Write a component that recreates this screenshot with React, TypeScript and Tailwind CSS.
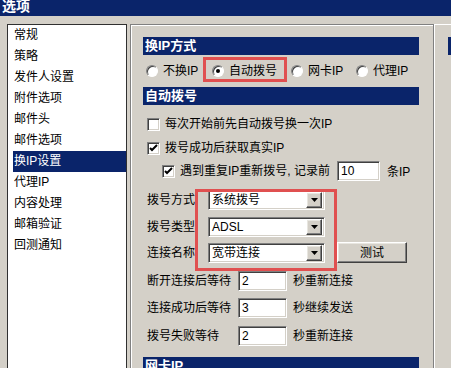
import { ReactNode } from 'react';

const sunken =
  'border border-t-[#808080] border-l-[#808080] border-r-white border-b-white shadow-[inset_1px_1px_0_#404040,inset_-1px_-1px_0_#d4d0c8]';
const raised =
  'border border-t-white border-l-white border-r-[#404040] border-b-[#404040] shadow-[inset_-1px_-1px_0_#808080,inset_1px_1px_0_#e8e6e0] bg-[#d4d0c8]';

const menu = ['常规', '策略', '发件人设置', '附件选项', '邮件头', '邮件选项', '换IP设置', '代理IP', '内容处理', '邮箱验证', '回测通知'];

const Header = ({ children }: { children: ReactNode }) => (
  <div className="h-[18px] w-[276px] bg-[#0a246a] pl-[2px] text-[13px] font-bold leading-[18px] text-white">
    {children}
  </div>
);

const Radio = ({ checked, label, width }: { checked?: boolean; label: string; width: string }) => (
  <div className={`flex items-center ${width}`}>
    <div className="relative flex h-[12px] w-[12px] items-center justify-center rounded-full border border-t-[#808080] border-l-[#808080] border-r-white border-b-white bg-white shadow-[inset_1px_1px_0_#404040]">
      {checked && <div className="h-[4px] w-[4px] rounded-full bg-black" />}
    </div>
    <span className="ml-[5px]">{label}</span>
  </div>
);

const Checkbox = ({ checked }: { checked?: boolean }) => (
  <div className={`flex h-[13px] w-[13px] shrink-0 items-center justify-center bg-white ${sunken}`}>
    {checked && (
      <svg width="9" height="9" viewBox="0 0 9 9">
        <path d="M1 4 L3 6 L8 1" fill="none" stroke="black" strokeWidth="2" />
      </svg>
    )}
  </div>
);

const Select = ({ value }: { value: string }) => (
  <div className={`flex h-[20px] w-[117px] items-center bg-white ${sunken} p-[2px]`}>
    <span className="flex-1 pl-[1px] leading-[16px]">{value}</span>
    <div className={`flex h-[16px] w-[16px] items-center justify-center ${raised}`}>
      <svg width="7" height="4" viewBox="0 0 7 4">
        <path d="M0 0 H7 L3.5 4 Z" fill="black" />
      </svg>
    </div>
  </div>
);

const TextBox = ({ value, width }: { value: string; width: string }) => (
  <div className={`h-[20px] ${width} bg-white ${sunken} pl-[3px] leading-[18px]`}>{value}</div>
);

export default function App() {
  return (
    <div className="h-[368px] w-[451px] overflow-hidden bg-[#d4d0c8] text-[12px] text-black font-['Liberation_Sans','Noto_Sans_CJK_SC',sans-serif]">
      {/* title bar */}
      <div className="h-[16px] bg-[#0a246a] pl-[2px] text-[14px] font-bold leading-[13px] text-white">选项</div>

      <div className="flex h-[352px] pt-[8px]">
        {/* left list */}
        <div className="ml-[7px] h-[360px] w-[120px] border border-[#303030] bg-white">
          {menu.map((m) => (
            <div
              key={m}
              className={`ml-[5px] h-[21px] pl-[1px] leading-[21px] ${m === '换IP设置' ? 'bg-[#0a246a] text-white' : ''}`}
            >
              {m}
            </div>
          ))}
        </div>

        {/* right panel */}
        <div className="ml-[3px] h-[360px] w-[304px] border-l border-r border-t border-[#808080] pl-[12px] pt-[12px] shadow-[inset_1px_1px_0_#fff]">
          <Header>换IP方式</Header>
          <div className="relative flex h-[32px] items-center pl-[3px]">
            <Radio label="不换IP" width="w-[66px]" />
            <Radio label="自动拨号" checked width="w-[79px]" />
            <Radio label="网卡IP" width="w-[65px]" />
            <Radio label="代理IP" width="w-[60px]" />
            <div className="absolute left-[60px] top-[2px] h-[25px] w-[84px] border-[3px] border-[#e05050]" />
          </div>

          <Header>自动拨号</Header>
          <div className="mt-[7px] flex h-[24px] items-center pl-[4px]">
            <Checkbox />
            <span className="ml-[5px]">每次开始前先自动拨号换一次IP</span>
          </div>
          <div className="flex h-[24px] items-center pl-[4px]">
            <Checkbox checked />
            <span className="ml-[5px]">拨号成功后获取真实IP</span>
          </div>
          <div className="flex h-[22px] items-center pl-[19px]">
            <Checkbox checked />
            <span className="ml-[5px] w-[157px] whitespace-nowrap">遇到重复IP重新拨号, 记录前</span>
            <TextBox value="10" width="w-[43px]" />
            <span className="ml-[7px] mt-[2px]">条IP</span>
          </div>

          <div className="relative">
            <div className="mt-[8px] flex h-[20px] items-center pl-[4px]">
              <span className="w-[61px]">拨号方式</span>
              <Select value="系统拨号" />
            </div>
            <div className="mt-[7px] flex h-[20px] items-center pl-[4px]">
              <span className="w-[61px]">拨号类型</span>
              <Select value="ADSL" />
            </div>
            <div className="mt-[5px] flex h-[21px] items-center pl-[4px]">
              <span className="w-[61px]">连接名称</span>
              <Select value="宽带连接" />
              <div className={`ml-[12px] flex h-[21px] w-[70px] items-center justify-center ${raised}`}>测试</div>
            </div>
            <div className="absolute left-[52px] top-[-1px] h-[82px] w-[142px] border-[3px] border-[#e05050]" />
          </div>

          <div className="mt-[8px] flex h-[20px] items-center pl-[4px]">
            <span className="w-[91px]">断开连接后等待</span>
            <TextBox value="2" width="w-[49px]" />
            <span className="ml-[6px]">秒重新连接</span>
          </div>
          <div className="mt-[7px] flex h-[20px] items-center pl-[4px]">
            <span className="w-[91px]">连接成功后等待</span>
            <TextBox value="3" width="w-[49px]" />
            <span className="ml-[6px]">秒继续发送</span>
          </div>
          <div className="mt-[8px] flex h-[20px] items-center pl-[4px]">
            <span className="w-[91px]">拨号失败等待</span>
            <TextBox value="2" width="w-[49px]" />
            <span className="ml-[6px]">秒重新连接</span>
          </div>

          <div className="mt-[11px]">
            <Header>网卡IP</Header>
          </div>
        </div>

        {/* next column */}
        <div className="h-[360px] flex-1 border-l border-t border-white pl-[13px] pt-[12px]">
          <div className="h-[18px] bg-[#0a246a]" />
        </div>
      </div>
    </div>
  );
}
